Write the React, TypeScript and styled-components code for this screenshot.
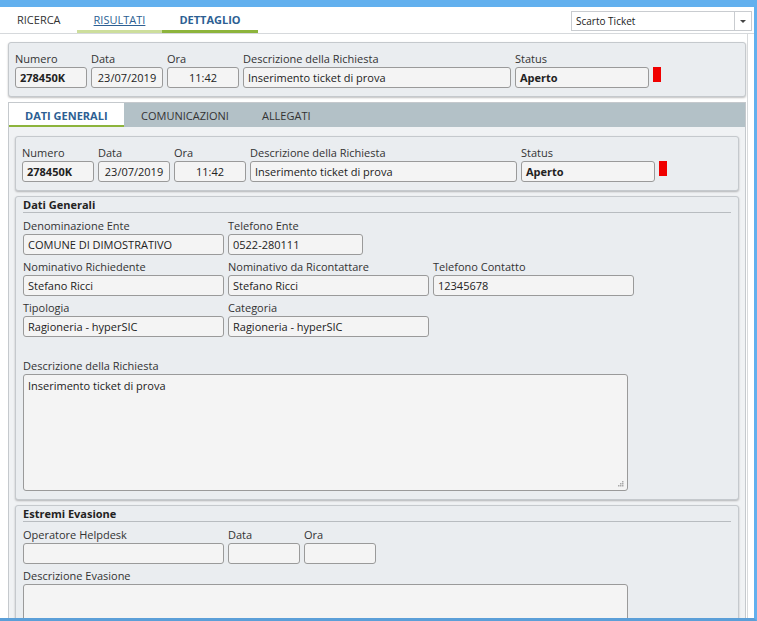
import React from 'react';
import styled, { createGlobalStyle } from 'styled-components';

const GlobalStyle = createGlobalStyle`
  html, body {
    margin: 0;
    padding: 0;
    background: #ffffff;
  }
  body {
    font-family: "Open Sans", "Noto Sans", Arial, sans-serif;
    font-size: 11px;
    color: #333;
  }
  * { box-sizing: border-box; }
`;

const Frame = styled.div`
  height: 621px;
  width: 757px;
  border-top: 7px solid #62b0ee;
  border-right: 3px solid #62b0ee;
  border-bottom: 3px solid #5b9fd8;
  background: #fff;
  display: flex;
  flex-direction: column;
  overflow: hidden;
`;

const TopBar = styled.div`
  height: 27px;
  flex-shrink: 0;
  display: flex;
  align-items: stretch;
  border-bottom: 1px solid #d6d9dc;
  padding-left: 1px;
  padding-right: 2px;
`;

const TopTab = styled.div<{ $active?: boolean; $link?: boolean; $line?: string }>`
  display: flex;
  align-items: center;
  padding: 2px 16px 0 16px;
  font-size: 11px;
  color: ${p => (p.$active || p.$link ? '#2d5f93' : '#333')};
  font-weight: ${p => (p.$active ? 700 : 400)};
  text-decoration: ${p => (p.$link ? 'underline' : 'none')};
  border-bottom: 3px solid ${p => p.$line || 'transparent'};

  & + & {
    padding-left: 17px;
    padding-right: 17px;
  }
`;

const Spacer = styled.div`
  flex: 1;
`;

const Select = styled.div`
  margin-top: 4px;
  width: 181px;
  height: 20px;
  border: 1px solid #c9ccd0;
  display: flex;
  font-size: 10px;
  color: #222;
`;

const SelectText = styled.div`
  flex: 1;
  padding-left: 4px;
  display: flex;
  align-items: center;
`;

const SelectArrow = styled.div`
  width: 17px;
  border-left: 1px solid #c9ccd0;
  display: flex;
  align-items: center;
  justify-content: center;
  &::after {
    content: '';
    border-left: 3px solid transparent;
    border-right: 3px solid transparent;
    border-top: 3px solid #444;
  }
`;

const Body = styled.div`
  flex: 1;
  display: flex;
  overflow: hidden;
`;

const Scroller = styled.div`
  width: 746px;
  padding: 8px 0 0 8px;
  display: flex;
  flex-direction: column;
  gap: 5px;
`;

const Track = styled.div`
  width: 8px;
  border-left: 1px solid #d8dadc;
  margin-left: 1px;
`;

const Panel = styled.div`
  background: #eaedf0;
  border: 1px solid #c5c9cd;
  border-radius: 3px;
  box-shadow: 0 1px 2px rgba(0, 0, 0, 0.25);
  padding: 8px 6px 8px 6px;
`;

const Row = styled.div`
  display: flex;
  gap: 4px;
  align-items: flex-end;
`;

const Field = styled.div<{ $w: number; $top?: number }>`
  width: ${p => p.$w}px;
  display: flex;
  flex-direction: column;
  margin-top: ${p => p.$top || 0}px;
`;

const Label = styled.div`
  height: 15px;
  line-height: 15px;
  font-size: 11px;
  color: #333;
  white-space: nowrap;
  margin-bottom: 1px;
`;

const Input = styled.div<{ $bold?: boolean; $center?: boolean }>`
  height: 21px;
  border: 1px solid #9a9a9a;
  border-radius: 3px;
  background: #f4f4f4;
  padding: 0 4px;
  display: flex;
  align-items: center;
  justify-content: ${p => (p.$center ? 'center' : 'flex-start')};
  font-weight: ${p => (p.$bold ? 700 : 400)};
  font-size: 11px;
  color: #222;
  white-space: nowrap;
`;

const StatusFlag = styled.div`
  width: 8px;
  height: 15px;
  background: #f00000;
  align-self: flex-end;
  margin-bottom: 6px;
`;

const TabPanel = styled.div`
  width: 738px;
  background: #f0f2f4;
  border: 1px solid #c5c9cd;
  border-bottom: none;
  display: flex;
  flex-direction: column;
`;

const TabStrip = styled.div`
  height: 24px;
  background: #b3c1c7;
  display: flex;
`;

const Tab = styled.div<{ $active?: boolean }>`
  display: flex;
  align-items: center;
  padding: ${p => (p.$active ? '2px 0 0 16px' : '2px 16px 0 17px')};
  width: ${p => (p.$active ? '115px' : 'auto')};
  background: ${p => (p.$active ? '#ffffff' : 'transparent')};
  border-bottom: 2px solid ${p => (p.$active ? '#8db43c' : 'transparent')};
  color: ${p => (p.$active ? '#2d5f93' : '#333')};
  font-weight: ${p => (p.$active ? 700 : 400)};
  font-size: 11px;
  white-space: nowrap;
`;

const TabBody = styled.div`
  padding: 9px 6px 0 6px;
  display: flex;
  flex-direction: column;
  gap: 5px;
`;

const Fieldset = styled(Panel)`
  padding: 0 7px 8px 7px;
`;

const Legend = styled.div`
  font-weight: 700;
  font-size: 11px;
  color: #222;
  height: 16px;
  line-height: 15px;
  border-bottom: 1px solid #b8bcc0;
  margin-bottom: 5px;
`;

const Stack = styled.div`
  display: flex;
  flex-direction: column;
  gap: 4px;
`;

const TextArea = styled.div<{ $h: number }>`
  width: 605px;
  height: ${p => p.$h}px;
  border: 1px solid #9a9a9a;
  border-radius: 3px;
  background: #f4f4f4;
  padding: 3px 4px;
  font-size: 11px;
  color: #222;
  position: relative;
`;

const Grip = styled.svg`
  position: absolute;
  right: 3px;
  bottom: 3px;
`;

const Header = ({ n }: { n: number }) => (
  <Panel>
    <Row>
      <Field $w={72}>
        <Label>Numero</Label>
        <Input $bold>278450K</Input>
      </Field>
      <Field $w={72}>
        <Label>Data</Label>
        <Input $center>23/07/2019</Input>
      </Field>
      <Field $w={72}>
        <Label>Ora</Label>
        <Input $center>11:42</Input>
      </Field>
      <Field $w={n}>
        <Label>Descrizione della Richiesta</Label>
        <Input>Inserimento ticket di prova</Input>
      </Field>
      <Field $w={134}>
        <Label>Status</Label>
        <Input $bold>Aperto</Input>
      </Field>
      <StatusFlag />
    </Row>
  </Panel>
);

export default function App() {
  return (
    <>
      <GlobalStyle />
      <Frame>
        <TopBar>
          <TopTab>RICERCA</TopTab>
          <TopTab $link $line="#cdde9c">RISULTATI</TopTab>
          <TopTab $active $line="#8db43c">DETTAGLIO</TopTab>
          <Spacer />
          <Select>
            <SelectText>Scarto Ticket</SelectText>
            <SelectArrow />
          </Select>
        </TopBar>
        <Body>
          <Scroller>
            <Header n={268} />
            <TabPanel>
              <TabStrip>
                <Tab $active>DATI GENERALI</Tab>
                <Tab>COMUNICAZIONI</Tab>
                <Tab>ALLEGATI</Tab>
              </TabStrip>
              <TabBody>
                <Header n={267} />
                <Fieldset>
                  <Legend>Dati Generali</Legend>
                  <Stack>
                    <Row>
                      <Field $w={201}>
                        <Label>Denominazione Ente</Label>
                        <Input>COMUNE DI DIMOSTRATIVO</Input>
                      </Field>
                      <Field $w={135}>
                        <Label>Telefono Ente</Label>
                        <Input>0522-280111</Input>
                      </Field>
                    </Row>
                    <Row>
                      <Field $w={201}>
                        <Label>Nominativo Richiedente</Label>
                        <Input>Stefano Ricci</Input>
                      </Field>
                      <Field $w={201}>
                        <Label>Nominativo da Ricontattare</Label>
                        <Input>Stefano Ricci</Input>
                      </Field>
                      <Field $w={201}>
                        <Label>Telefono Contatto</Label>
                        <Input>12345678</Input>
                      </Field>
                    </Row>
                    <Row>
                      <Field $w={201}>
                        <Label>Tipologia</Label>
                        <Input>Ragioneria - hyperSIC</Input>
                      </Field>
                      <Field $w={201}>
                        <Label>Categoria</Label>
                        <Input>Ragioneria - hyperSIC</Input>
                      </Field>
                    </Row>
                    <Field $w={605} $top={17}>
                      <Label>Descrizione della Richiesta</Label>
                      <TextArea $h={117}>
                        Inserimento ticket di prova
                        <Grip width="7" height="7" viewBox="0 0 7 7">
                          <rect x="5" y="1" width="1.5" height="1.5" fill="#aaa" />
                          <rect x="3" y="3" width="1.5" height="1.5" fill="#aaa" />
                          <rect x="5" y="3" width="1.5" height="1.5" fill="#aaa" />
                          <rect x="1" y="5" width="1.5" height="1.5" fill="#aaa" />
                          <rect x="3" y="5" width="1.5" height="1.5" fill="#aaa" />
                          <rect x="5" y="5" width="1.5" height="1.5" fill="#aaa" />
                        </Grip>
                      </TextArea>
                    </Field>
                  </Stack>
                </Fieldset>
                <Fieldset>
                  <Legend>Estremi Evasione</Legend>
                  <Stack>
                    <Row>
                      <Field $w={201}>
                        <Label>Operatore Helpdesk</Label>
                        <Input />
                      </Field>
                      <Field $w={72}>
                        <Label>Data</Label>
                        <Input />
                      </Field>
                      <Field $w={72}>
                        <Label>Ora</Label>
                        <Input />
                      </Field>
                    </Row>
                    <Field $w={605}>
                      <Label>Descrizione Evasione</Label>
                      <TextArea $h={80} />
                    </Field>
                  </Stack>
                </Fieldset>
              </TabBody>
            </TabPanel>
          </Scroller>
          <Track />
        </Body>
      </Frame>
    </>
  );
}
